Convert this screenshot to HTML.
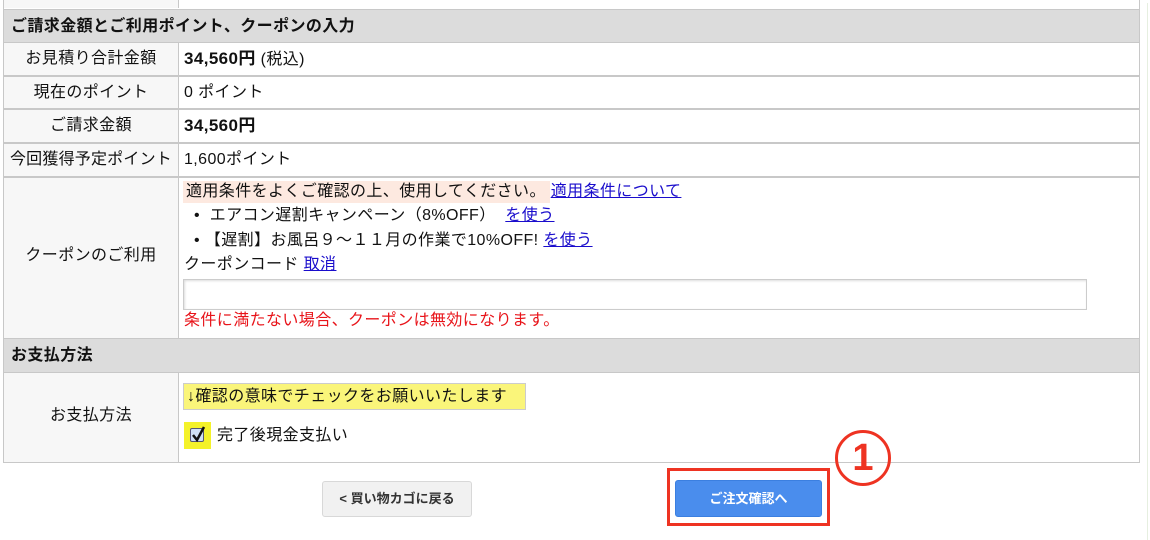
<!DOCTYPE html>
<html><head><meta charset="utf-8"><style>
body{margin:0;width:1150px;height:540px;background:#fff;position:relative;overflow:hidden;font-family:"Liberation Sans","Noto Sans CJK JP",sans-serif;font-size:16px;letter-spacing:0.4px;color:#111}
.a{position:absolute}
.h{background:#dcdcdc;font-weight:bold;font-size:16px;line-height:34px;padding-left:7px;box-sizing:border-box}
.l{background:#f7f7f7;text-align:center;box-sizing:border-box;white-space:nowrap}
.ln{background:#c8c8c8}
a{color:#1a0dcc;text-decoration:underline}
</style></head><body>
<div class="a" style="left:3px;top:0;width:1137px;height:463px;border:1px solid #c8c8c8;border-top:none;box-sizing:border-box"></div>
<div class="a" style="left:1147px;top:3px;width:1px;height:537px;background:#e6efe0"></div>
<div class="a l" style="left:4px;top:0;width:174px;height:8px"></div>
<div class="a ln" style="left:178px;top:0;width:1px;height:8px"></div>
<div class="a h" style="left:4px;top:9px;width:1135px;height:34px;border-top:1px solid #c8c8c8;border-bottom:1px solid #c8c8c8">ご請求金額とご利用ポイント、クーポンの入力</div>
<div class="a l" style="left:4px;top:43px;width:174px;height:32px;line-height:32px">お見積り合計金額</div>
<div class="a" style="left:184px;top:43px;line-height:32px"><b style="font-size:17px">34,560円</b> (税込)</div>
<div class="a ln" style="left:4px;top:75px;width:1135px;height:2px"></div>
<div class="a l" style="left:4px;top:77px;width:174px;height:31px;line-height:31px">現在のポイント</div>
<div class="a" style="left:184px;top:77px;line-height:31px">0 ポイント</div>
<div class="a ln" style="left:4px;top:108px;width:1135px;height:2px"></div>
<div class="a l" style="left:4px;top:110px;width:174px;height:32px;line-height:32px">ご請求金額</div>
<div class="a" style="left:184px;top:110px;line-height:32px"><b style="font-size:17px">34,560円</b></div>
<div class="a ln" style="left:4px;top:142px;width:1135px;height:2px"></div>
<div class="a l" style="left:4px;top:144px;width:174px;height:32px;line-height:32px;letter-spacing:0.2px">今回獲得予定ポイント</div>
<div class="a" style="left:184px;top:144px;line-height:32px">1,600ポイント</div>
<div class="a ln" style="left:4px;top:176px;width:1135px;height:2px"></div>
<div class="a l" style="left:4px;top:178px;width:174px;height:160px;line-height:156px">クーポンのご利用</div>
<div class="a" style="left:183px;top:181px;width:367px;height:22px;background:#fde9e0"></div>
<div class="a" style="left:186px;top:181px;line-height:22px;white-space:nowrap">適用条件をよくご確認の上、使用してください。 <a>適用条件について</a></div>
<div class="a" style="left:194px;top:205px;line-height:22px;white-space:nowrap">•&nbsp;&nbsp;エアコン遅割キャンペーン（8%OFF）&nbsp; <a>を使う</a></div>
<div class="a" style="left:194px;top:230px;line-height:22px;white-space:nowrap">•&nbsp;【遅割】お風呂９～１１月の作業で10%OFF! <a>を使う</a></div>
<div class="a" style="left:184px;top:254px;line-height:22px;white-space:nowrap">クーポンコード <a>取消</a></div>
<div class="a" style="left:183px;top:279px;width:904px;height:31px;border:1px solid #ccc;box-shadow:inset 1px 1px 2px #ddd;box-sizing:border-box"></div>
<div class="a" style="left:184px;top:310px;line-height:22px;color:#e8141a;white-space:nowrap">条件に満たない場合、クーポンは無効になります。</div>
<div class="a ln" style="left:178px;top:43px;width:1px;height:295px"></div>
<div class="a h" style="left:4px;top:338px;width:1135px;height:35px;border-top:1px solid #c8c8c8;border-bottom:1px solid #c8c8c8;line-height:33px">お支払方法</div>
<div class="a l" style="left:4px;top:373px;width:174px;height:89px;line-height:86px">お支払方法</div>
<div class="a ln" style="left:178px;top:373px;width:1px;height:89px"></div>
<div class="a" style="left:183px;top:383px;width:343px;height:27px;background:#faf57a;border:1px solid #ccc;box-sizing:border-box;line-height:25px;padding-left:3px;white-space:nowrap">↓確認の意味でチェックをお願いいたします</div>
<div class="a" style="left:184px;top:422px;width:27px;height:27px;background:#f4f22a"></div>
<div class="a" style="left:190px;top:428px;width:14px;height:14px;background:#cfe0f5;border:1px solid #557;box-sizing:border-box;border-radius:2px"></div>
<svg class="a" style="left:189px;top:424px" width="18" height="20"><path d="M4 11 L8 16 L15 3" stroke="#111" stroke-width="2.5" fill="none"/></svg>
<div class="a" style="left:217px;top:425px;line-height:22px">完了後現金支払い</div>
<div class="a" style="left:322px;top:481px;width:150px;height:36px;background:#f1f1f1;border:1px solid #d8d8d8;border-radius:3px;box-sizing:border-box;text-align:center;line-height:34px;font-size:13px;letter-spacing:0;font-weight:bold;color:#333">&lt; 買い物カゴに戻る</div>
<div class="a" style="left:667px;top:468px;width:163px;height:58px;border:3px solid #ee3322;box-sizing:border-box"></div>
<div class="a" style="left:675px;top:480px;width:147px;height:37px;background:#4a8ded;border:1px solid #3b7fe0;border-radius:3px;box-sizing:border-box;text-align:center;line-height:35px;font-size:13px;letter-spacing:0;font-weight:bold;color:#fff">ご注文確認へ</div>
<div class="a" style="left:835px;top:430px;width:56px;height:56px;border:3px solid #ee3322;border-radius:50%;box-sizing:border-box;text-align:center;line-height:50px;color:#ee3322;font-size:38px;letter-spacing:0;font-weight:bold">1</div>
</body></html>
